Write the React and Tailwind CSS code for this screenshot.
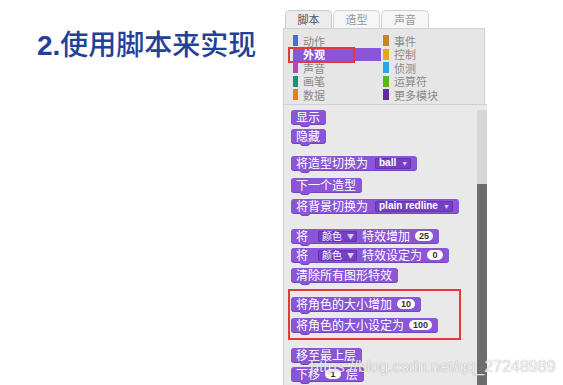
import React from "react";

function Block({ className, children }) {
  return (
    <div
      className={`relative self-start flex items-center h-[14px] pl-[5px] pr-[6px] gap-[5px] rounded-[3px] bg-[#8a55d7] shadow-[0_1px_0_#7443c0] text-white text-[12px] leading-none whitespace-nowrap ${className}`}
    >
      {children}
      <span className="absolute left-[9px] top-[13px] w-[10px] h-[3px] bg-[#8a55d7] rounded-b-[3px] shadow-[0_1px_0_#7443c0]" />
    </div>
  );
}

function Drop({ children, className = "" }) {
  return (
    <span
      className={`inline-flex items-center h-[11px] pl-[4px] pr-[3px] gap-[5px] bg-[#7441c4] rounded-[2px] shadow-[inset_0_0_0_1px_#6533b0] text-[10px] text-white leading-none ${className}`}
    >
      {children}
      <span className="text-[7px] text-[#d9c8f5]">▼</span>
    </span>
  );
}

function Num({ children }) {
  return (
    <span className="inline-flex items-center justify-center h-[10px] px-[4px] min-w-[16px] bg-white rounded-full text-[9px] font-bold text-[#333] leading-none font-['Liberation_Sans',sans-serif]">
      {children}
    </span>
  );
}

const cats = [
  ["动作", "bg-[#4a6cd4]", "事件", "bg-[#c88330]"],
  ["外观", "bg-[#8a55d7]", "控制", "bg-[#e1a91a]"],
  ["声音", "bg-[#bb42c3]", "侦测", "bg-[#2ca5e2]"],
  ["画笔", "bg-[#0e9a6c]", "运算符", "bg-[#5cb712]"],
  ["数据", "bg-[#ee7d16]", "更多模块", "bg-[#632d99]"],
];

export default function App() {
  return (
    <div className="relative w-[563px] h-[385px] bg-white flex overflow-hidden font-['Liberation_Sans','Noto_Sans_CJK_SC',sans-serif]">
      {/* Title */}
      <div className="w-[283px] pl-[37px] pt-[29px]">
        <div className="flex items-baseline text-[#23409a] text-[28px] leading-none">
          <span className="font-bold font-['Liberation_Sans',sans-serif]">2.</span>
          <span className="font-medium font-['Noto_Sans_CJK_SC',sans-serif]">使用脚本来实现</span>
        </div>
      </div>

      {/* Scratch panel */}
      <div className="w-[204px] flex flex-col">
        {/* tabs */}
        <div className="h-[28px] flex items-end pl-[2px] gap-[1px]">
          <div className="w-[47px] h-[18px] flex items-center justify-center bg-[#ececec] border border-b-0 border-[#c9c9c9] rounded-t-[5px] text-[11px] text-[#555] font-['Noto_Sans_CJK_SC',sans-serif]">
            脚本
          </div>
          <div className="w-[47px] h-[18px] flex items-center justify-center bg-[#f6f6f6] border border-b-0 border-[#d2d2d2] rounded-t-[5px] text-[11px] text-[#999] font-['Noto_Sans_CJK_SC',sans-serif]">
            造型
          </div>
          <div className="w-[48px] h-[18px] flex items-center justify-center bg-[#f6f6f6] border border-b-0 border-[#d2d2d2] rounded-t-[5px] text-[11px] text-[#999] font-['Noto_Sans_CJK_SC',sans-serif]">
            声音
          </div>
        </div>

        {/* categories */}
        <div className="w-[202px] h-[76px] bg-[#e6e6e6] border-l border-t border-r border-[#d0d0d0] pt-[5px] flex flex-col">
          {cats.map(([a, ca, b, cb], i) => (
            <div key={a} className="h-[13.5px] flex items-center">
              <div className="relative w-[99px] h-full flex items-center pl-[9px]">
                {i === 1 ? (
                  <>
                    <div className="w-[88px] h-[13px] flex items-center bg-[#8a55d7] pl-[10px] text-[11px] font-bold text-white font-['Noto_Sans_CJK_SC',sans-serif]">
                      {a}
                    </div>
                    <div className="absolute left-[4px] -top-[1px] w-[67px] h-[16px] border-2 border-[#e53935]" />
                  </>
                ) : (
                  <>
                    <div className={`w-[5px] h-[11px] ${ca}`} />
                    <span className="ml-[5px] text-[11px] text-[#8a8a8a] font-['Noto_Sans_CJK_SC',sans-serif]">{a}</span>
                  </>
                )}
              </div>
              <div className="flex items-center">
                <div className={`w-[6px] h-[11px] ${cb}`} />
                <span className="ml-[5px] text-[11px] text-[#8a8a8a] font-['Noto_Sans_CJK_SC',sans-serif]">{b}</span>
              </div>
            </div>
          ))}
        </div>

        {/* scripts area */}
        <div className="relative flex-1 flex bg-[#e9e9e9] border-l border-t border-[#d0d0d0] font-['Noto_Sans_CJK_SC',sans-serif]">
          <div className="w-[193px] flex flex-col pl-[7px]">
            <Block className="mt-[5px]">显示</Block>
            <Block className="mt-[5px]">隐藏</Block>
            <Block className="mt-[13px] pr-[3px]">
              将造型切换为
              <Drop className="ml-[2px] font-bold font-['Liberation_Sans',sans-serif]">ball</Drop>
            </Block>
            <Block className="mt-[8px]">下一个造型</Block>
            <Block className="mt-[7px] pr-[3px]">
              将背景切换为
              <Drop className="ml-[2px] font-bold font-['Liberation_Sans',sans-serif]">plain redline</Drop>
            </Block>
            <Block className="mt-[16px]">
              <span className="mr-[5px]">将</span>
              <Drop className="text-[9px]">颜色</Drop>
              特效增加
              <Num>25</Num>
            </Block>
            <Block className="mt-[5px]">
              <span className="mr-[5px]">将</span>
              <Drop className="text-[9px]">颜色</Drop>
              特效设定为
              <Num>0</Num>
            </Block>
            <Block className="mt-[6px]">清除所有图形特效</Block>
            <Block className="mt-[15px]">
              将角色的大小增加
              <Num>10</Num>
            </Block>
            <Block className="mt-[7px]">
              将角色的大小设定为
              <Num>100</Num>
            </Block>
            <Block className="mt-[16px]">移至最上层</Block>
            <Block className="mt-[5px]">
              下移
              <Num>1</Num>
              层
            </Block>
          </div>
          {/* scrollbar */}
          <div className="w-[10px] flex flex-col pt-[5px]">
            <div className="h-[74px] bg-[#d6d6d6]" />
            <div className="flex-1 bg-[#6d6d6d]" />
          </div>
          {/* red highlight */}
          <div className="absolute left-[4px] top-[184px] w-[173px] h-[51px] border-2 border-[#e53935]" />
        </div>
      </div>

      {/* watermark */}
      <div className="absolute left-[310px] top-[359px] text-[16px] leading-none text-white/85 [text-shadow:0_0_1px_rgba(0,0,0,0.45)] font-['Liberation_Sans',sans-serif] whitespace-nowrap">
        https://blog.csdn.net/qq_27248989
      </div>
    </div>
  );
}
